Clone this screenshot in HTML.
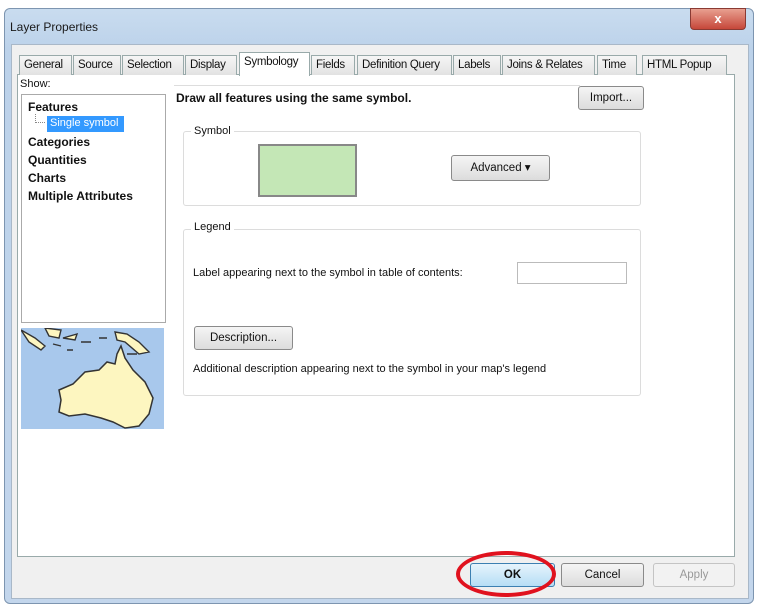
<!DOCTYPE html>
<html><head><style>
*{margin:0;padding:0;box-sizing:border-box}
body{width:763px;height:607px;background:#fff;position:relative;overflow:hidden;font-family:"Liberation Sans",sans-serif;font-size:11px;color:#111}
.a{position:absolute}
.tab{position:absolute;top:55px;height:20px;border:1px solid #9aa;border-bottom:none;background:linear-gradient(#f6f6f6,#e2e2e2);font-size:11.5px;padding:3px 4px;white-space:nowrap;letter-spacing:-0.3px}
.btn{position:absolute;border:1px solid #8a8a8a;border-radius:3px;background:linear-gradient(#f5f5f5,#dcdcdc);text-align:center;font-size:11.5px}
.grp{position:absolute;border:1px solid #dcdcdc;border-radius:3px}
</style></head><body>
<div class="a" style="left:4px;top:8px;width:750px;height:596px;background:linear-gradient(#c9dcef,#bcd2ea 40px,#c3d6ec);border:1px solid #7d95b0;border-radius:6px"></div>
<div class="a" style="left:10px;top:20px;font-size:12px;color:#1a1a1a">Layer Properties</div>
<div class="a" style="left:690px;top:8px;width:56px;height:22px;background:linear-gradient(#e8a090,#c6473a);border:1px solid #8a3a33;border-radius:0 0 4px 4px;color:#fff;text-align:center;font-weight:bold;font-size:13px;line-height:20px">x</div>
<div class="a" style="left:11px;top:44px;width:738px;height:555px;background:#f0f0f0;border:1px solid #a9b8c8"></div>
<div class="a" style="left:17px;top:74px;width:718px;height:483px;background:#fff;border:1px solid #9aa"></div>
<div class="tab" style="left:19px;width:53px">General</div>
<div class="tab" style="left:73px;width:48px">Source</div>
<div class="tab" style="left:122px;width:62px">Selection</div>
<div class="tab" style="left:185px;width:52px">Display</div>
<div class="tab" style="left:239px;top:52px;height:24px;width:71px;background:#fff">Symbology</div>
<div class="tab" style="left:311px;width:44px">Fields</div>
<div class="tab" style="left:357px;width:95px">Definition Query</div>
<div class="tab" style="left:453px;width:48px">Labels</div>
<div class="tab" style="left:502px;width:93px">Joins &amp; Relates</div>
<div class="tab" style="left:597px;width:40px">Time</div>
<div class="tab" style="left:642px;width:85px">HTML Popup</div>
<div class="a" style="left:20px;top:78px;font-size:11px">Show:</div>
<div class="a" style="left:21px;top:94px;width:145px;height:229px;border:1px solid #aaa;background:#fff"></div>
<div class="a" style="left:28px;top:98px;font-weight:bold;font-size:12px;line-height:18px">Features</div>
<div class="a" style="left:35px;top:114px;width:10px;height:9px;border-left:1px dotted #888;border-bottom:1px dotted #888"></div>
<div class="a" style="left:47px;top:116px;width:77px;height:16px;background:#3399ff;color:#fff;font-size:11px;padding:1px 3px">Single symbol</div>
<div class="a" style="left:28px;top:133px;font-weight:bold;font-size:12px;line-height:18px">Categories<br>Quantities<br>Charts<br>Multiple Attributes</div>
<svg class="a" style="left:21px;top:328px" width="143" height="101" viewBox="0 0 143 101">
<rect width="143" height="101" fill="#a8c8ec"/>
<path d="M38 62 L52 56 L64 44 L78 42 L86 34 L94 36 L96 26 L100 18 L104 30 L112 42 L124 54 L132 70 L128 86 L118 98 L104 100 L92 94 L80 90 L64 86 L48 88 L38 84 L40 72 Z" fill="#fdf6c0" stroke="#333" stroke-width="1.5"/>
<path d="M0 2 L14 10 L24 18 L20 22 L8 14 Z M24 0 L40 2 L38 10 L28 8 Z M42 10 L56 6 L54 12 Z M94 4 L106 6 L118 14 L128 24 L118 26 L104 14 L96 12 Z M32 16 L40 18 M46 22 L52 22 M60 14 L70 14 M78 10 L86 10 M106 26 L116 26 Z" fill="#fdf6c0" stroke="#333" stroke-width="1.4"/>
</svg>
<div class="a" style="left:174px;top:85px;width:406px;border-top:1px solid #ddd"></div>
<div class="a" style="left:176px;top:91px;font-weight:bold;font-size:12px">Draw all features using the same symbol.</div>
<div class="btn" style="left:578px;top:86px;width:66px;height:24px;line-height:22px">Import...</div>
<div class="grp" style="left:183px;top:131px;width:458px;height:75px"></div>
<div class="a" style="left:191px;top:125px;background:#fff;padding:0 3px">Symbol</div>
<div class="a" style="left:258px;top:144px;width:99px;height:53px;border:2px solid #888;background:#c4e7b6"></div>
<div class="btn" style="left:451px;top:155px;width:99px;height:26px;line-height:24px">Advanced ▾</div>
<div class="grp" style="left:183px;top:229px;width:458px;height:167px"></div>
<div class="a" style="left:191px;top:221px;background:#fff;padding:0 3px">Legend</div>
<div class="a" style="left:193px;top:267px">Label appearing next to the symbol in table of contents:</div>
<div class="a" style="left:517px;top:262px;width:110px;height:22px;border:1px solid #bbb"></div>
<div class="btn" style="left:194px;top:326px;width:99px;height:24px;line-height:22px">Description...</div>
<div class="a" style="left:193px;top:363px">Additional description appearing next to the symbol in your map's legend</div>
<div class="btn" style="left:470px;top:563px;width:85px;height:24px;line-height:22px;background:linear-gradient(#e6f4fc,#b6def5);border-color:#3c7fb1;font-weight:bold">OK</div>
<div class="btn" style="left:561px;top:563px;width:83px;height:24px;line-height:22px">Cancel</div>
<div class="btn" style="left:653px;top:563px;width:82px;height:24px;line-height:22px;color:#999;border-color:#c4c4c4;background:#f2f2f2">Apply</div>
<div class="a" style="left:456px;top:551px;width:100px;height:46px;border:4px solid #e0121e;border-radius:50%"></div>
</body></html>
